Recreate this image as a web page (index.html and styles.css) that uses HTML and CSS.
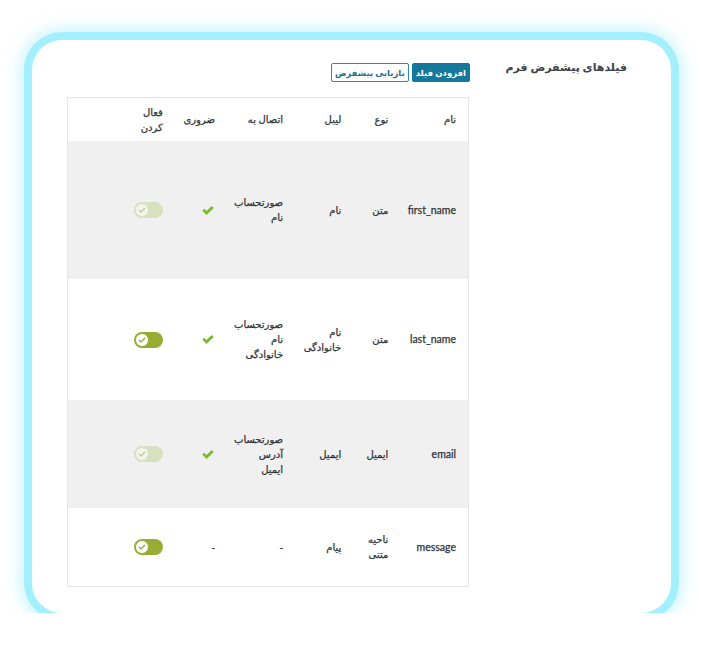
FILE: index.html
```html
<!DOCTYPE html>
<html lang="fa" dir="rtl">
<head>
<meta charset="utf-8">
<title>فیلدهای پیشفرض فرم</title>
<link rel="stylesheet" href="styles.css">
</head>
<body>
<div class="card">
  <div class="side">
    <h2 class="title">فیلدهای پیشفرض فرم</h2>
  </div>
  <div class="main">
    <div class="actions">
      <button class="btn btn-primary">افزودن فیلد</button>
      <button class="btn btn-outline">بازیابی پیشفرض</button>
    </div>
    <table class="fields">
      <colgroup>
        <col class="c-name"><col class="c-type"><col class="c-label"><col class="c-link"><col class="c-req"><col class="c-act"><col class="c-rest">
      </colgroup>
      <thead>
        <tr>
          <th>نام</th>
          <th>نوع</th>
          <th>لیبل</th>
          <th>اتصال به</th>
          <th>ضروری</th>
          <th><span class="ln">فعال</span><span class="ln">کردن</span></th>
          <th></th>
        </tr>
      </thead>
      <tbody>
        <tr class="row-1">
          <td class="latin">first_name</td>
          <td>متن</td>
          <td>نام</td>
          <td><span class="ln">صورتحساب</span><span class="ln">نام</span></td>
          <td><svg class="check" width="12" height="9" viewBox="0 0 12 9"><path d="M0.3 4.6 L2.2 2.8 L4.5 5.1 L9.8 0 L11.7 1.9 L4.5 9 Z" fill="#7ab92b"/></svg></td>
          <td><span class="toggle off"><span class="knob"><svg width="8" height="6" viewBox="0 0 8 6"><path d="M1 3 L3 5 L7 1" fill="none" stroke="currentColor" stroke-width="1.1"/></svg></span></span></td>
          <td></td>
        </tr>
        <tr class="row-2">
          <td class="latin">last_name</td>
          <td>متن</td>
          <td><span class="ln">نام</span><span class="ln">خانوادگی</span></td>
          <td><span class="ln">صورتحساب</span><span class="ln">نام</span><span class="ln">خانوادگی</span></td>
          <td><svg class="check" width="12" height="9" viewBox="0 0 12 9"><path d="M0.3 4.6 L2.2 2.8 L4.5 5.1 L9.8 0 L11.7 1.9 L4.5 9 Z" fill="#7ab92b"/></svg></td>
          <td><span class="toggle on"><span class="knob"><svg width="8" height="6" viewBox="0 0 8 6"><path d="M1 3 L3 5 L7 1" fill="none" stroke="currentColor" stroke-width="1.1"/></svg></span></span></td>
          <td></td>
        </tr>
        <tr class="row-3">
          <td class="latin">email</td>
          <td>ایمیل</td>
          <td>ایمیل</td>
          <td><span class="ln">صورتحساب</span><span class="ln">آدرس</span><span class="ln">ایمیل</span></td>
          <td><svg class="check" width="12" height="9" viewBox="0 0 12 9"><path d="M0.3 4.6 L2.2 2.8 L4.5 5.1 L9.8 0 L11.7 1.9 L4.5 9 Z" fill="#7ab92b"/></svg></td>
          <td><span class="toggle off"><span class="knob"><svg width="8" height="6" viewBox="0 0 8 6"><path d="M1 3 L3 5 L7 1" fill="none" stroke="currentColor" stroke-width="1.1"/></svg></span></span></td>
          <td></td>
        </tr>
        <tr class="row-4">
          <td class="latin">message</td>
          <td><span class="ln">ناحیه</span><span class="ln">متنی</span></td>
          <td>پیام</td>
          <td>-</td>
          <td>-</td>
          <td><span class="toggle on"><span class="knob"><svg width="8" height="6" viewBox="0 0 8 6"><path d="M1 3 L3 5 L7 1" fill="none" stroke="currentColor" stroke-width="1.1"/></svg></span></span></td>
          <td></td>
        </tr>
      </tbody>
    </table>
  </div>
</div>
</body>
</html>
```
FILE: styles.css
```css
html, body {
  margin: 0;
  padding: 0;
  background: #ffffff;
}
body {
  font-family: "Noto Sans", "DejaVu Sans", sans-serif;
  color: #2c3338;
}
.card {
  box-sizing: border-box;
  width: 639px;
  height: 573px;
  margin: 40px 30px 0 32px;
  padding: 23px 44px 0 35px;
  background: #ffffff;
  border-radius: 30px;
  box-shadow: 0 0 0 8px #a4effd, 0 0 14px 13px rgba(164, 239, 253, 0.5);
  display: flex;
  direction: rtl;
}
.side {
  width: 158px;
  flex: none;
}
.title {
  margin: -5px 0 0 0;
  font-size: 11px;
  font-weight: bold;
  line-height: 18px;
  color: #3c434a;
  white-space: nowrap;
}
.main {
  flex: 1;
  display: flex;
  flex-direction: column;
}
.actions {
  display: flex;
  gap: 3px;
  margin-right: -1px;
  margin-bottom: 15px;
}
.btn {
  font-family: inherit;
  font-size: 8.5px;
  font-weight: bold;
  height: 19px;
  line-height: 15px;
  padding: 0 3px;
  border-radius: 2px;
  box-sizing: border-box;
  white-space: nowrap;
  cursor: pointer;
}
.btn-primary {
  background: #14789c;
  border: 1px solid #14789c;
  color: #ffffff;
  min-width: 58px;
}
.btn-outline {
  background: #ffffff;
  border: 1px solid #3189a8;
  color: #1f6f8d;
  min-width: 74px;
}
.fields {
  width: 402px;
  border-collapse: collapse;
  table-layout: fixed;
  border: 1px solid #e5e5e5;
  font-size: 10px;
  line-height: 15px;
}
.c-name { width: 68px; }
.c-type { width: 47px; }
.c-label { width: 58px; }
.c-link { width: 68px; }
.c-req { width: 52px; }
.c-act { width: 50px; }
.c-rest { width: 57px; }
.fields th,
.fields td {
  padding: 0 12px 0 0;
  text-align: right;
  vertical-align: middle;
  color: #2c3338;
  white-space: nowrap;
  -webkit-text-stroke: 0.25px #2c3338;
}
.fields th {
  font-weight: normal;
  height: 43px;
  background: #ffffff;
}
.fields td.latin {
  font-family: Lato, "Noto Sans", sans-serif;
  font-size: 10.5px;
  color: #2c3338;
}
.ln {
  display: block;
}
.row-1 td { height: 138px; background: #f0f0f0; }
.row-2 td { height: 121px; background: #ffffff; }
.row-3 td { height: 108px; background: #f0f0f0; }
.row-4 td { height: 78px; background: #ffffff; }
.check {
  display: block;
  margin-left: auto;
  margin-right: 1px;
}
.toggle {
  display: flex;
  align-items: center;
  width: 29px;
  height: 16px;
  border-radius: 8px;
  box-sizing: border-box;
  padding: 0 1px;
  direction: ltr;
}
.toggle .knob {
  width: 14px;
  height: 14px;
  border-radius: 50%;
  box-sizing: border-box;
  display: flex;
  align-items: center;
  justify-content: center;
}
.toggle.on {
  background: #98ac34;
}
.toggle.on .knob {
  background: #ffffff;
  border: 1.5px solid #98ac34;
  color: #8aa02a;
}
.toggle.off {
  background: #d8e0bd;
}
.toggle.off .knob {
  background: #f3f5ea;
  border: 1px solid #d8e0bd;
  color: #b8c49a;
}
```
